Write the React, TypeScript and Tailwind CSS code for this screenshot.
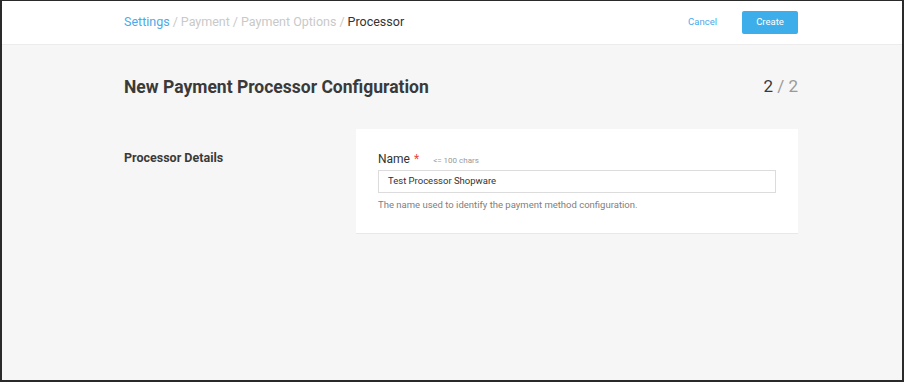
import React from "react";

const font = { fontFamily: "Roboto, 'Liberation Sans', sans-serif" };

export default function App() {
  return (
    <div
      className="w-[904px] h-[382px] flex flex-col bg-[#f6f6f6] border-t border-l-2 border-r-2 border-b-2 border-[#2a2a2a] overflow-hidden"
      style={font}
    >
      {/* top bar */}
      <header className="h-[44px] shrink-0 bg-white border-b border-[#ececec] flex items-center">
        <div className="w-[674px] ml-[122px] flex items-center">
          <nav className="text-[12.5px] flex items-center gap-[3px] text-[#c9c9c9]">
            <span className="text-[#4ba9e9]">Settings</span>
            <span>/</span>
            <span>Payment</span>
            <span>/</span>
            <span>Payment Options</span>
            <span>/</span>
            <span className="text-[#333]">Processor</span>
          </nav>
          <div className="ml-auto flex items-center">
            <button className="text-[9.5px] text-[#4ba9e9] mr-[25px]">Cancel</button>
            <button className="w-[56px] h-[23px] rounded-[2px] bg-[#3eaeea] text-white text-[9.5px]">
              Create
            </button>
          </div>
        </div>
      </header>

      <main className="w-[674px] ml-[122px]">
        <div className="flex items-center h-[84px]">
          <h1 className="text-[17.5px] font-bold text-[#3a3a3a]">New Payment Processor Configuration</h1>
          <div className="ml-auto text-[17px] text-[#9a9a9a]">
            <span className="text-[#3a3a3a]">2</span> / 2
          </div>
        </div>

        <div className="flex">
          <div className="w-[232px] pt-[20px]">
            <h2 className="text-[12.5px] font-bold text-[#3a3a3a]">Processor Details</h2>
          </div>
          <section className="w-[442px] bg-white border-b border-[#e8e8e8] px-[22px] pt-[21px] pb-[21px]">
            <div className="flex items-baseline">
              <span className="text-[12px] text-[#333]">Name</span>
              <span className="text-[12px] text-[#e8463e] ml-[4px]">*</span>
              <span className="text-[8px] text-[#999] ml-[14px]">&lt;= 100 chars</span>
            </div>
            <div className="mt-[2px] h-[23px] border border-[#dcdcdc] flex items-center px-[9px] text-[9.5px] text-[#333]">
              Test Processor Shopware
            </div>
            <p className="mt-[5px] text-[9.5px] text-[#808080]">
              The name used to identify the payment method configuration.
            </p>
          </section>
        </div>
      </main>
    </div>
  );
}
